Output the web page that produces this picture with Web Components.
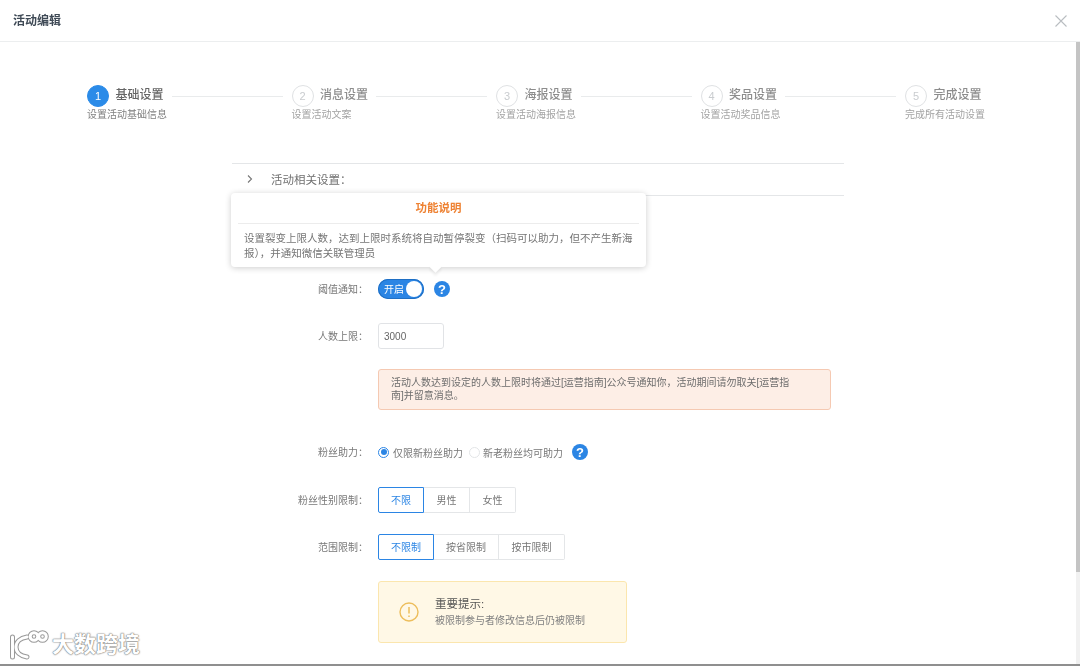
<!DOCTYPE html>
<html lang="zh">
<head>
<meta charset="utf-8">
<title>活动编辑</title>
<style>
  html, body { margin: 0; padding: 0; background: #fff; }
  body { font-family: "Liberation Sans", "Noto Sans CJK SC", sans-serif; color: #666; }
</style>
</head>
<body>
<activity-dialog>
  <step-bar>
    <step-item num="1" title="基础设置" sub="设置活动基础信息" active></step-item>
    <step-item num="2" title="消息设置" sub="设置活动文案"></step-item>
    <step-item num="3" title="海报设置" sub="设置活动海报信息"></step-item>
    <step-item num="4" title="奖品设置" sub="设置活动奖品信息"></step-item>
    <step-item num="5" title="完成设置" sub="完成所有活动设置" last></step-item>
  </step-bar>
  <settings-panel>
    <form-row label="阈值通知&#xFF1A;" style="margin-top:83px;height:20px"><on-toggle></on-toggle><help-icon style="margin-left:10px"></help-icon></form-row>
    <form-row label="人数上限&#xFF1A;" style="margin-top:24px;height:26px"><text-box value="3000"></text-box></form-row>
    <form-row style="margin-top:20px"><notice-box>活动人数达到设定的人数上限时将通过[运营指南]公众号通知你&#xFF0C;活动期间请勿取关[运营指南]并留意消息。</notice-box></form-row>
    <form-row label="粉丝助力&#xFF1A;" style="margin-top:32px;height:20px">
      <radio-item checked>仅限新粉丝助力</radio-item>
      <radio-item style="margin-left:6px;--gap:3px">新老粉丝均可助力</radio-item>
      <help-icon style="margin-left:9px"></help-icon>
    </form-row>
    <form-row label="粉丝性别限制&#xFF1A;" style="margin-top:25px;height:26px">
      <seg-group>
        <seg-button selected style="width:46px">不限</seg-button>
        <seg-button style="width:46px">男性</seg-button>
        <seg-button style="width:46px">女性</seg-button>
      </seg-group>
    </form-row>
    <form-row label="范围限制&#xFF1A;" style="margin-top:21px;height:26px">
      <seg-group>
        <seg-button selected style="width:56px">不限制</seg-button>
        <seg-button style="width:65px">按省限制</seg-button>
        <seg-button style="width:66px">按市限制</seg-button>
      </seg-group>
    </form-row>
    <form-row style="margin-top:21px"><warn-box heading="重要提示:">被限制参与者修改信息后仍被限制</warn-box></form-row>
  </settings-panel>
</activity-dialog>
<script>
class ActivityDialog extends HTMLElement {
  constructor() {
    super();
    this.attachShadow({mode: 'open'}).innerHTML = `
      <style>
        :host { display: block; width: 1080px; height: 666px; overflow: hidden; position: relative; background: #fff; }
        .frame { height: 664px; display: flex; flex-direction: column; border-bottom: 2px solid #8f8f8f; filter: blur(.4px); }
        header { flex: none; height: 41px; display: flex; align-items: center; justify-content: space-between; padding: 0 13px; border-bottom: 1px solid #eceeef; }
        h1 { margin: 0 0 2px; font-size: 12px; font-weight: 700; color: #3f4a56; }
        main { flex: 1; min-height: 0; overflow: hidden; padding-top: 43px; }
        svg { display: block; }
        .bar { position: absolute; right: 0; top: 42px; width: 4px; height: 622px; background: #f1f1f1; }
        .bar i { display: block; height: 530px; background: #c4c4c4; }
        .mark { position: absolute; left: 8px; top: 630px; display: flex; align-items: center; gap: 3px; }
        .mark span { font-size: 22px; font-weight: 700; line-height: 30px; color: #fff; text-shadow: 0 0 1px #777, 0 0 1px #777, 0 0 2px #999; }
      </style>
      <div class="frame">
        <header>
          <h1>活动编辑</h1>
          <svg width="12" height="12" viewBox="0 0 12 12" fill="none" stroke="#b9bdc1" stroke-width="1.1"><path d="M.5.5l11 11M11.5.5l-11 11"/></svg>
        </header>
        <main><slot></slot></main>
      </div>
      <div class="bar"><i></i></div>
      <div class="mark">
        <svg width="41" height="30" viewBox="0 0 41 30" fill="none" stroke-linecap="round">
          <g stroke="#999" stroke-width="5"><path d="M4.5 7v20M19 7c-7 1-11 5-11 10s4 9 11 10"/><circle cx="26" cy="6.5" r="3.8"/><circle cx="34.5" cy="6.5" r="3.8"/></g>
          <g stroke="#fff" stroke-width="3"><path d="M4.5 7v20M19 7c-7 1-11 5-11 10s4 9 11 10"/><circle cx="26" cy="6.5" r="3.8"/><circle cx="34.5" cy="6.5" r="3.8"/></g>
        </svg>
        <span>大数跨境</span>
      </div>`;
  }
}
customElements.define('activity-dialog', ActivityDialog);

class StepBar extends HTMLElement {
  constructor() {
    super();
    this.attachShadow({mode: 'open'}).innerHTML = `
      <style>:host { display: flex; padding-left: 87px; }</style>
      <slot></slot>`;
  }
}
customElements.define('step-bar', StepBar);

class StepItem extends HTMLElement {
  constructor() {
    super();
    const active = this.hasAttribute('active');
    this.attachShadow({mode: 'open'}).innerHTML = `
      <style>
        :host { display: block; flex: 0 0 204.5px; }
        .top { display: flex; align-items: center; height: 22px; }
        .dot { flex: none; box-sizing: border-box; width: 22px; height: 22px; border-radius: 50%; display: flex; align-items: center; justify-content: center; font-size: 11px;
               border: 1px solid ${active ? '#2b8be8' : '#dfe1e3'}; background: ${active ? '#2b8be8' : '#fff'}; color: ${active ? '#fff' : '#c9cccf'}; }
        .title { margin-left: 6.5px; font-size: 12px; font-weight: 500; color: ${active ? '#666' : '#8d8d8d'}; white-space: nowrap; position: relative; top: -3px; }
        .line { flex: 1; height: 1px; margin: 0 9px 0 8px; background: #e9ebec; }
        .sub { margin-top: 1px; font-size: 10px; line-height: 14px; color: ${active ? '#808080' : '#a3a3a3'}; white-space: nowrap; }
      </style>
      <div class="top"><span class="dot">${this.getAttribute('num')}</span><span class="title">${this.getAttribute('title')}</span>${this.hasAttribute('last') ? '' : '<span class="line"></span>'}</div>
      <div class="sub">${this.getAttribute('sub')}</div>`;
  }
}
customElements.define('step-item', StepItem);

class SettingsPanel extends HTMLElement {
  constructor() {
    super();
    this.attachShadow({mode: 'open'}).innerHTML = `
      <style>
        :host { display: block; position: relative; width: 612px; margin: 41px 0 0 232px; }
        .head { box-sizing: border-box; height: 33px; padding-bottom: 1px; border-top: 1px solid #e4e6e8; border-bottom: 1px solid #e4e6e8; display: flex; align-items: center; font-size: 11.5px; color: #707070; }
        svg { margin: 0 18px 0 15px; }
        .tip { position: absolute; left: -1px; top: 30px; width: 415px; height: 74px; box-sizing: border-box; background: #fff; border-radius: 4px; box-shadow: 0 1px 6px rgba(0,0,0,.2); padding: 0 7px; }
        .tip::after { content: ""; position: absolute; left: 200px; bottom: -4px; width: 9px; height: 9px; background: #fff; transform: rotate(45deg); box-shadow: 2px 2px 3px rgba(0,0,0,.08); }
        h2 { margin: 0; height: 30px; line-height: 31px; font-size: 11.5px; font-weight: 700; color: #ee8233; text-align: center; border-bottom: 1px solid #ececec; }
        p { margin: 0; padding: 7px 5px 7px 6px; font-size: 10.5px; line-height: 15px; color: #757575; }
      </style>
      <div class="head">
        <svg width="6" height="8" viewBox="0 0 6 8" fill="none" stroke="#777" stroke-width="1.1"><path d="M1 .5L4.5 4 1 7.5"/></svg>
        活动相关设置&#xFF1A;
      </div>
      <slot></slot>
      <div class="tip">
        <h2>功能说明</h2>
        <p>设置裂变上限人数&#xFF0C;达到上限时系统将自动暂停裂变&#xFF08;扫码可以助力&#xFF0C;但不产生新海报&#xFF09;&#xFF0C;并通知微信关联管理员</p>
      </div>`;
  }
}
customElements.define('settings-panel', SettingsPanel);

class FormRow extends HTMLElement {
  constructor() {
    super();
    this.attachShadow({mode: 'open'}).innerHTML = `
      <style>
        :host { display: grid; grid-template-columns: 136px 1fr; column-gap: 10px; align-items: center; }
        label { font-size: 10px; color: #777; text-align: right; white-space: nowrap; position: relative; top: -1px; }
        div { display: flex; align-items: center; }
      </style>
      <label>${this.getAttribute('label') || ''}</label>
      <div><slot></slot></div>`;
  }
}
customElements.define('form-row', FormRow);

class OnToggle extends HTMLElement {
  constructor() {
    super();
    this.attachShadow({mode: 'open'}).innerHTML = `
      <style>
        :host { display: flex; align-items: center; box-sizing: border-box; width: 46px; height: 20px; border-radius: 10px; background: #2b85e4; box-shadow: inset 0 0 0 1px #1f6fc4; padding: 0 2px 0 6px; color: #fff; font-size: 10px; justify-content: space-between; }
        span { position: relative; top: -1px; }
        i { width: 16px; height: 16px; border-radius: 50%; background: #fff; }
      </style>
      <span>开启</span><i></i>`;
  }
}
customElements.define('on-toggle', OnToggle);

class HelpIcon extends HTMLElement {
  constructor() {
    super();
    this.attachShadow({mode: 'open'}).innerHTML = `
      <style>
        :host { display: flex; flex: none; align-items: center; justify-content: center; width: 16px; height: 16px; border-radius: 50%; background: #2b85e4; color: #fff; font: 700 13px "Liberation Sans", sans-serif; }
      </style>?`;
  }
}
customElements.define('help-icon', HelpIcon);

class TextBox extends HTMLElement {
  constructor() {
    super();
    this.attachShadow({mode: 'open'}).innerHTML = `
      <style>
        :host { display: flex; align-items: center; box-sizing: border-box; width: 66px; height: 26px; padding-left: 5px; border: 1px solid #e1e3e6; border-radius: 3px; font-size: 10px; color: #666; }
      </style>${this.getAttribute('value')}`;
  }
}
customElements.define('text-box', TextBox);

class NoticeBox extends HTMLElement {
  constructor() {
    super();
    this.attachShadow({mode: 'open'}).innerHTML = `
      <style>
        :host { display: block; box-sizing: border-box; width: 453px; height: 41px; padding: 6px 36px 0 12px; background: #fdeee6; border: 1px solid #f5c9b2; border-radius: 3px; font-size: 10px; line-height: 13px; color: #6d6d6d; }
      </style><slot></slot>`;
  }
}
customElements.define('notice-box', NoticeBox);

class RadioItem extends HTMLElement {
  constructor() {
    super();
    const on = this.hasAttribute('checked');
    this.attachShadow({mode: 'open'}).innerHTML = `
      <style>
        :host { display: flex; align-items: center; gap: var(--gap, 4px); font-size: 10px; color: #777; white-space: nowrap; }
        i { box-sizing: border-box; width: 11px; height: 11px; border-radius: 50%; border: 1px solid ${on ? '#2b85e4' : '#e2e4e6'}; display: flex; align-items: center; justify-content: center; }
        b { width: 6px; height: 6px; border-radius: 50%; background: #2b85e4; }
      </style>
      <i>${on ? '<b></b>' : ''}</i><slot></slot>`;
  }
}
customElements.define('radio-item', RadioItem);

class SegGroup extends HTMLElement {
  constructor() {
    super();
    this.attachShadow({mode: 'open'}).innerHTML = `
      <style>:host { display: flex; height: 26px; }</style><slot></slot>`;
  }
}
customElements.define('seg-group', SegGroup);

class SegButton extends HTMLElement {
  constructor() {
    super();
    const on = this.hasAttribute('selected');
    this.attachShadow({mode: 'open'}).innerHTML = `
      <style>
        :host { display: flex; align-items: center; justify-content: center; box-sizing: border-box; height: 26px; padding-bottom: 1px; font-size: 10px;
                border: 1px solid ${on ? '#2b85e4' : '#e4e6e8'}; border-left-width: ${on ? 1 : 0}px; color: ${on ? '#2b85e4' : '#777'}; border-radius: ${on ? '2px 0 0 2px' : '0'}; }
        :host(:last-child) { border-radius: 0 2px 2px 0; }
      </style><slot></slot>`;
  }
}
customElements.define('seg-button', SegButton);

class WarnBox extends HTMLElement {
  constructor() {
    super();
    this.attachShadow({mode: 'open'}).innerHTML = `
      <style>
        :host { display: flex; align-items: center; box-sizing: border-box; width: 249px; height: 62px; padding-left: 20px; background: #fff8e6; border: 1px solid #fbe6ae; border-radius: 3px; }
        svg { flex: none; margin-right: 16px; }
        b { display: block; font-size: 11.5px; font-weight: 400; line-height: 16px; color: #555; position: relative; top: -1px; }
        span { display: block; font-size: 10px; line-height: 14px; color: #808080; margin-top: 1px; }
      </style>
      <svg width="20" height="20" viewBox="0 0 20 20" fill="none" stroke="#edbe5c"><circle cx="10" cy="10" r="9" stroke-width="1.4"/><path d="M10 5v6.5M10 13.5v1.5" stroke-width="1.5"/></svg>
      <div><b>${this.getAttribute('heading')}</b><span><slot></slot></span></div>`;
  }
}
customElements.define('warn-box', WarnBox);
</script>
</body>
</html>
